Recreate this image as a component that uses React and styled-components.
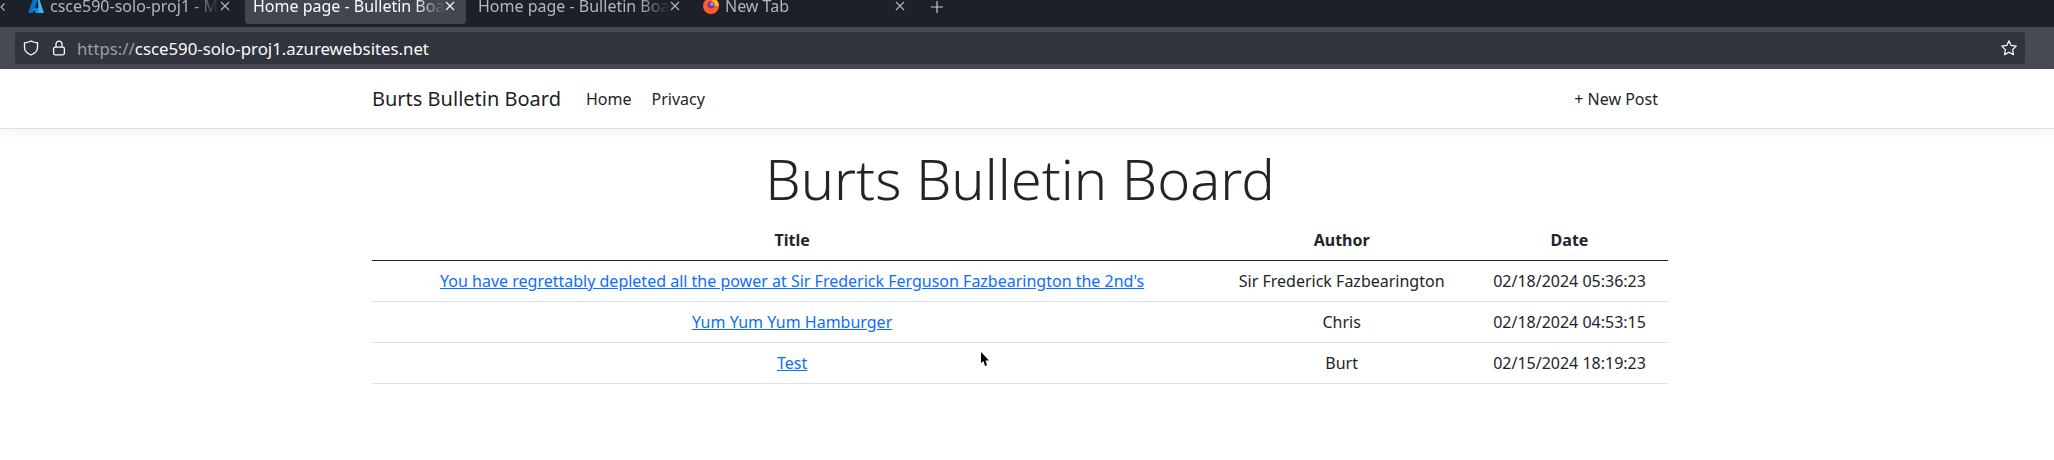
import React from "react";
import styled, { createGlobalStyle } from "styled-components";

const GlobalStyle = createGlobalStyle`
  html, body {
    margin: 0;
    padding: 0;
    background: #fff;
    font-family: "Noto Sans", "Open Sans", sans-serif;
    color: #212529;
  }
`;

const Page = styled.div`
  position: relative;
  width: 2054px;
  height: 460px;
  overflow: hidden;
  background: #fff;
`;

const TabStrip = styled.div`
  display: flex;
  align-items: flex-end;
  height: 27px;
  padding-bottom: 3px;
  box-sizing: border-box;
  gap: 4px;
  background: #1c2029;
  overflow: hidden;
`;

const ScrollArrow = styled.svg`
  flex: none;
  width: 6px;
  height: 10px;
  margin: 0 10px 12px 0;
`;

const Tab = styled.div`
  flex: none;
  display: flex;
  align-items: center;
  gap: 6px;
  width: 221px;
  height: 36px;
  padding: 0 8px;
  box-sizing: border-box;
  border-radius: 4px;
  background: ${(p) => (p.$active ? "#42464f" : "transparent")};
  color: ${(p) => (p.$active ? "#fbfbfe" : "#b4b6bb")};
`;

const TabTitle = styled.span`
  flex: 1;
  min-width: 0;
  font-size: 16px;
  white-space: nowrap;
  overflow: hidden;
  mask-image: linear-gradient(to right, #000 84%, transparent 100%);
`;

const TabClose = styled.svg`
  flex: none;
  width: 10px;
  height: 10px;
  margin: 0 3px 0 -6px;
`;

const NewTabIcon = styled.svg`
  flex: none;
  width: 12px;
  height: 12px;
  margin: 0 0 11px 11px;
`;

const Toolbar = styled.div`
  display: flex;
  align-items: center;
  height: 42px;
  padding: 0 29px 0 15px;
  box-sizing: border-box;
  background: #454a53;
`;

const UrlBar = styled.div`
  flex: 1;
  display: flex;
  align-items: center;
  height: 32px;
  padding: 0 8px;
  border-radius: 4px;
  background: #31343c;
`;

const UrlIcon = styled.svg`
  flex: none;
  width: 16px;
  height: 16px;
  margin-right: ${(p) => p.$gap || 0}px;
`;

const UrlText = styled.div`
  flex: 1;
  font-size: 16.8px;
  color: #fbfbfe;
  white-space: nowrap;
`;

const UrlScheme = styled.span`
  color: #9b9da1;
`;

const Navbar = styled.nav`
  position: relative;
  height: 60px;
  padding-right: 14px;
  box-sizing: border-box;
  border-bottom: 1px solid #dee2e6;
  box-shadow: 0 4px 12px rgba(0, 0, 0, 0.05);
  background: #fff;
`;

const Container = styled.div`
  width: 1320px;
  margin: 0 auto;
  padding: 0 12px;
  box-sizing: border-box;
`;

const NavRow = styled(Container)`
  display: flex;
  align-items: center;
  height: 59px;
`;

const Brand = styled.a`
  font-size: 20px;
  color: rgba(0, 0, 0, 0.9);
  margin-right: 17px;
`;

const NavLink = styled.a`
  padding: 8px;
  font-size: 16px;
  color: #212529;
  margin-right: ${(p) => (p.$push ? "2px" : "4px")};
  margin-left: ${(p) => (p.$push ? "auto" : "0")};
`;

const Main = styled.main`
  padding: 16px 14px 0 0;
`;

const Heading = styled.h1`
  margin: 0 0 8px;
  font-size: 56px;
  font-weight: 300;
  line-height: 1.2;
  text-align: center;
  color: #212529;
`;

const PostTable = styled.table`
  width: 100%;
  border-collapse: collapse;
  font-size: 16px;
  color: #212529;
`;

const HeadCell = styled.th`
  padding: 8px;
  line-height: 24px;
  font-weight: 700;
  text-align: center;
  border-bottom: 1px solid #212529;
`;

const Cell = styled.td`
  padding: 8px;
  line-height: 24px;
  text-align: center;
  border-bottom: 1px solid #dee2e6;
`;

const PostLink = styled.a`
  color: #0d6efd;
  text-decoration: underline;
`;

const Cursor = styled.svg`
  position: absolute;
  left: 981px;
  top: 352px;
  width: 8px;
  height: 15px;
`;

const tabs = [
  { title: "csce590-solo-proj1 - Microsoft Azure", icon: "azure" },
  { title: "Home page - Bulletin Board", active: true },
  { title: "Home page - Bulletin Board" },
  { title: "New Tab", icon: "firefox" },
];

const posts = [
  {
    title: "You have regrettably depleted all the power at Sir Frederick Ferguson Fazbearington the 2nd's",
    author: "Sir Frederick Fazbearington",
    date: "02/18/2024 05:36:23",
  },
  { title: "Yum Yum Yum Hamburger", author: "Chris", date: "02/18/2024 04:53:15" },
  { title: "Test", author: "Burt", date: "02/15/2024 18:19:23" },
];

const AzureIcon = () => (
  <svg width="16" height="16" viewBox="0 0 16 16" style={{ flex: "none" }}>
    <path d="M5.4 1H10L5.2 14.6a.7.7 0 0 1-.7.4H1a.6.6 0 0 1-.6-.9L4.8 1.4A.7.7 0 0 1 5.4 1z" fill="#0a6fc7" />
    <path d="M11.8 10.2H4.6l3.4 4.8h7.4z" fill="#0f8be0" />
    <path d="M10 1h.8c.3 0 .6.2.7.5L15.8 14.2c.2.4-.1.8-.5.8h-4.6z" fill="#35b8ef" />
  </svg>
);

const FirefoxIcon = () => (
  <svg width="16" height="16" viewBox="0 0 16 16" style={{ flex: "none" }}>
    <circle cx="8" cy="8" r="8" fill="#ff5a2b" />
    <path d="M8 0a8 8 0 0 1 8 8h-4L9 3z" fill="#ffb52c" />
    <circle cx="8" cy="7" r="3.6" fill="#6f3bc4" />
    <circle cx="9" cy="6" r="1.6" fill="#ff9a2b" />
  </svg>
);

const CloseGlyph = ({ color }) => (
  <TabClose viewBox="0 0 10 10">
    <path d="M1 1l8 8M9 1l-8 8" stroke={color} strokeWidth="1.1" fill="none" />
  </TabClose>
);

const App = () => (
  <Page>
    <GlobalStyle />
    <TabStrip>
      <ScrollArrow viewBox="0 0 6 10">
        <path d="M4.5 1.5L1 5l3.5 3.5" stroke="#b4b6bb" strokeWidth="1.1" fill="none" />
      </ScrollArrow>
      {tabs.map((t, i) => (
        <Tab key={i} $active={t.active}>
          {t.icon === "azure" && <AzureIcon />}
          {t.icon === "firefox" && <FirefoxIcon />}
          <TabTitle>{t.title}</TabTitle>
          <CloseGlyph color={t.active ? "#fbfbfe" : "#b4b6bb"} />
        </Tab>
      ))}
      <NewTabIcon viewBox="0 0 12 12">
        <path d="M6 0v12M0 6h12" stroke="#c9cace" strokeWidth="1.2" fill="none" />
      </NewTabIcon>
    </TabStrip>
    <Toolbar>
      <UrlBar>
        <UrlIcon viewBox="0 0 16 16" $gap={12}>
          <path
            d="M8 1c2 1.100 4.300 1.700 6.500 1.800v4.400c0 3.600-2.900 6.400-6.500 7.800-3.600-1.400-6.500-4.200-6.500-7.800V2.800C3.700 2.700 6 2.100 8 1z"
            fill="none"
            stroke="#fbfbfe"
            strokeWidth="1.300"
          />
        </UrlIcon>
        <UrlIcon viewBox="0 0 16 16" $gap={10}>
          <rect x="2.600" y="7.200" width="10.800" height="7.600" rx="1.500" fill="none" stroke="#fbfbfe" strokeWidth="1.300" />
          <path d="M5 7V4.200a3 3 0 0 1 6 0V7" fill="none" stroke="#fbfbfe" strokeWidth="1.300" />
        </UrlIcon>
        <UrlText>
          <UrlScheme>https://</UrlScheme>csce590-solo-proj1.azurewebsites.net
        </UrlText>
        <UrlIcon viewBox="0 0 16 16">
          <path
            d="M8 .8l2.200 4.600 5 .7-3.600 3.500.9 5L8 12.200l-4.500 2.400.9-5L.8 6.100l5-.7z"
            fill="none"
            stroke="#fbfbfe"
            strokeWidth="1.200"
            strokeLinejoin="round"
          />
        </UrlIcon>
      </UrlBar>
    </Toolbar>
    <Navbar>
      <NavRow>
        <Brand>Burts Bulletin Board</Brand>
        <NavLink>Home</NavLink>
        <NavLink>Privacy</NavLink>
        <NavLink $push>+ New Post</NavLink>
      </NavRow>
    </Navbar>
    <Main>
      <Container>
        <Heading>Burts Bulletin Board</Heading>
        <PostTable>
          <thead>
            <tr>
              <HeadCell>Title</HeadCell>
              <HeadCell>Author</HeadCell>
              <HeadCell>Date</HeadCell>
            </tr>
          </thead>
          <tbody>
            {posts.map((p) => (
              <tr key={p.title}>
                <Cell>
                  <PostLink href="#">{p.title}</PostLink>
                </Cell>
                <Cell>{p.author}</Cell>
                <Cell>{p.date}</Cell>
              </tr>
            ))}
          </tbody>
        </PostTable>
      </Container>
    </Main>
    <Cursor viewBox="0 0 8 15">
      <path d="M0 0v11l2.500-2 1.500 5 2-.7L4.500 8.500H8z" fill="#000" />
    </Cursor>
  </Page>
);

export default App;
